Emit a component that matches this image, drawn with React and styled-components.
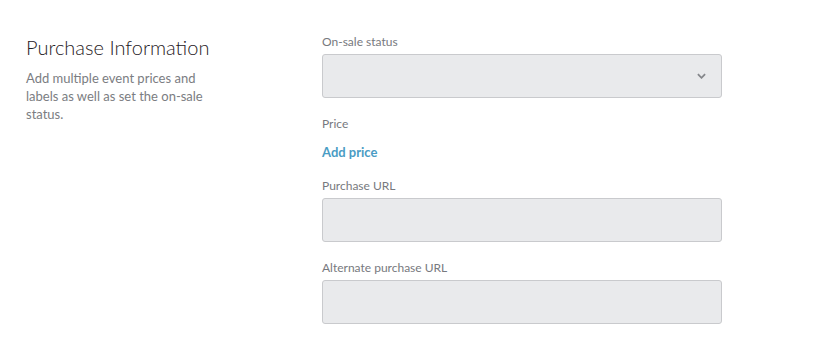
import React from "react";
import styled, { createGlobalStyle } from "styled-components";

const GlobalStyle = createGlobalStyle`
  body {
    margin: 0;
    background: #ffffff;
    font-family: "Lato", "Liberation Sans", sans-serif;
  }
`;

export default function App() {
  return (
    <>
      <GlobalStyle />
      <Section>
        <Intro>
          <Title>Purchase Information</Title>
          <Description>
            Add multiple event prices and labels as well as set the on-sale
            status.
          </Description>
        </Intro>
        <Form>
          <Field>
            <Label>On-sale status</Label>
            <SelectBox>
              <Chevron viewBox="0 0 10 6">
                <path d="M1 1l4 4 4-4" />
              </Chevron>
            </SelectBox>
          </Field>
          <Field $gap={13}>
            <Label>Price</Label>
            <AddLink>Add price</AddLink>
          </Field>
          <Field>
            <Label>Purchase URL</Label>
            <InputBox />
          </Field>
          <Field>
            <Label>Alternate purchase URL</Label>
            <InputBox />
          </Field>
        </Form>
      </Section>
    </>
  );
}

const Section = styled.section`
  display: flex;
  padding: 34px 0 0 26px;
  color: #222;
`;

const Intro = styled.div`
  width: 296px;
  flex-shrink: 0;
`;

const Title = styled.h2`
  margin: 0;
  font-size: 20px;
  font-weight: 300;
  line-height: 26px;
  color: #1f2024;
`;

const Description = styled.p`
  margin: 9px 0 0;
  width: 190px;
  font-size: 13px;
  line-height: 18px;
  color: #7b7d82;
`;

const Form = styled.div`
  display: flex;
  flex-direction: column;
  gap: 19px;
  width: 400px;
  padding-top: 1px;
`;

const Field = styled.div`
  display: flex;
  flex-direction: column;
  gap: ${({ $gap }) => $gap ?? 5}px;
`;

const Label = styled.label`
  font-size: 12px;
  line-height: 14px;
  color: #77797e;
`;

const InputBox = styled.div`
  height: 42px;
  background: #e9eaec;
  border: 1px solid #c9cacd;
  border-radius: 3px;
`;

const SelectBox = styled(InputBox)`
  display: flex;
  align-items: center;
  justify-content: flex-end;
  padding-right: 15px;
`;

const Chevron = styled.svg`
  width: 9px;
  height: 6px;
  fill: none;
  stroke: #85878b;
  stroke-width: 2;
`;

const AddLink = styled.a`
  font-size: 13px;
  font-weight: 700;
  line-height: 16px;
  color: #4a9cc4;
  cursor: pointer;
`;
